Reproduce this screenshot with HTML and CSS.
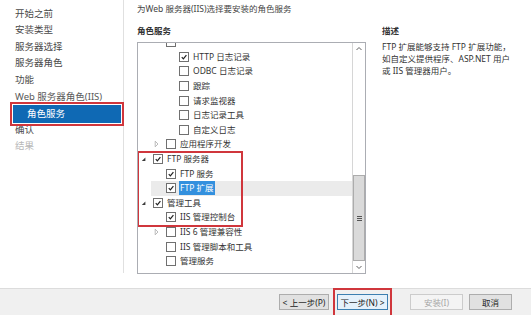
FILE: index.html
```html
<!DOCTYPE html>
<html lang="zh-CN">
<head>
<meta charset="utf-8">
<title>添加角色和功能向导</title>
<link rel="stylesheet" href="styles.css">
</head>
<body>
<div class="window">
  <div class="main">
    <nav class="nav">
      <div class="nav-item">开始之前</div>
      <div class="nav-item">安装类型</div>
      <div class="nav-item">服务器选择</div>
      <div class="nav-item">服务器角色</div>
      <div class="nav-item">功能</div>
      <div class="nav-item nav-item--muted">Web 服务器角色(IIS)</div>
      <div class="nav-item nav-item--current">角色服务</div>
      <div class="nav-item">确认</div>
      <div class="nav-item nav-item--disabled">结果</div>
    </nav>
    <section class="content">
      <div class="page-title">为Web 服务器(IIS)选择要安装的角色服务</div>
      <div class="columns">
        <div class="services">
          <div class="section-head">角色服务</div>
          <div class="listbox">
            <div class="tree">
              <div class="tree-inner">
                <div class="row l1"><span class="exp"></span><span class="cb"></span><span class="label"></span></div>
                <div class="row l2"><span class="exp"></span><span class="cb"><svg viewBox="0 0 10 10"><path d="M2.2 5.2 L4.2 7.3 L8 2.6"/></svg></span><span class="label">HTTP 日志记录</span></div>
                <div class="row l2"><span class="exp"></span><span class="cb"></span><span class="label">ODBC 日志记录</span></div>
                <div class="row l2"><span class="exp"></span><span class="cb"></span><span class="label">跟踪</span></div>
                <div class="row l2"><span class="exp"></span><span class="cb"></span><span class="label">请求监视器</span></div>
                <div class="row l2"><span class="exp"></span><span class="cb"></span><span class="label">日志记录工具</span></div>
                <div class="row l2"><span class="exp"></span><span class="cb"></span><span class="label">自定义日志</span></div>
                <div class="row l1"><span class="exp"><svg viewBox="0 0 10 10"><path class="collapsed" d="M1.5 1.5 L5 5 L1.5 8.5 Z"/></svg></span><span class="cb"></span><span class="label">应用程序开发</span></div>
                <div class="group">
                  <div class="row l0"><span class="exp"><svg viewBox="0 0 10 10"><path class="expanded" d="M5.5 3 L5.5 7.5 L1 7.5 Z"/></svg></span><span class="cb"><svg viewBox="0 0 10 10"><path d="M2.2 5.2 L4.2 7.3 L8 2.6"/></svg></span><span class="label">FTP 服务器</span></div>
                  <div class="row l1"><span class="exp"></span><span class="cb"><svg viewBox="0 0 10 10"><path d="M2.2 5.2 L4.2 7.3 L8 2.6"/></svg></span><span class="label">FTP 服务</span></div>
                  <div class="row l1 row--selected"><span class="exp"></span><span class="cb"><svg viewBox="0 0 10 10"><path d="M2.2 5.2 L4.2 7.3 L8 2.6"/></svg></span><span class="label label--selected">FTP 扩展</span></div>
                  <div class="row l0"><span class="exp"><svg viewBox="0 0 10 10"><path class="expanded" d="M5.5 3 L5.5 7.5 L1 7.5 Z"/></svg></span><span class="cb"><svg viewBox="0 0 10 10"><path d="M2.2 5.2 L4.2 7.3 L8 2.6"/></svg></span><span class="label">管理工具</span></div>
                  <div class="row l1"><span class="exp"></span><span class="cb"><svg viewBox="0 0 10 10"><path d="M2.2 5.2 L4.2 7.3 L8 2.6"/></svg></span><span class="label">IIS 管理控制台</span></div>
                </div>
                <div class="row l1"><span class="exp"><svg viewBox="0 0 10 10"><path class="collapsed" d="M1.5 1.5 L5 5 L1.5 8.5 Z"/></svg></span><span class="cb"></span><span class="label">IIS 6 管理兼容性</span></div>
                <div class="row l1"><span class="exp"></span><span class="cb"></span><span class="label">IIS 管理脚本和工具</span></div>
                <div class="row l1"><span class="exp"></span><span class="cb"></span><span class="label">管理服务</span></div>
              </div>
            </div>
            <div class="scrollbar">
              <div class="sb-btn"><svg viewBox="0 0 8 6"><path d="M1.5 4 L4 1.5 L6.5 4"/></svg></div>
              <div class="sb-track">
                <div class="sb-thumb"><span class="grip"></span><span class="grip"></span><span class="grip"></span></div>
              </div>
              <div class="sb-btn"><svg viewBox="0 0 8 6"><path d="M1.5 2 L4 4.5 L6.5 2"/></svg></div>
            </div>
          </div>
        </div>
        <div class="desc">
          <div class="section-head">描述</div>
          <p class="desc-text">FTP 扩展能够支持 FTP 扩展功能，<br>如自定义提供程序、ASP.NET 用户<br>或 IIS 管理器用户。</p>
        </div>
      </div>
    </section>
  </div>
  <footer class="footer">
    <button class="btn btn-prev">&lt; 上一步(P)</button>
    <button class="btn btn-next">下一步(N) &gt;</button>
    <button class="btn btn-install" disabled>安装(I)</button>
    <button class="btn btn-cancel">取消</button>
  </footer>
</div>
</body>
</html>
```
FILE: styles.css
```css
html, body {
  margin: 0;
  padding: 0;
}
body {
  width: 531px;
  height: 315px;
  overflow: hidden;
  background: #ffffff;
  font-family: "Noto Sans", "Noto Sans CJK SC", sans-serif;
  color: #333333;
}
.window {
  display: flex;
  flex-direction: column;
  height: 315px;
}
.main {
  display: flex;
  height: 288px;
  flex: none;
}

/* left navigation */
.nav {
  width: 124px;
  flex: none;
  box-sizing: border-box;
  border-right: 1px solid #e0e0e0;
  margin-bottom: 15px;
  padding-top: 5.7px;
}
.nav-item {
  height: 16.6px;
  line-height: 16.6px;
  padding-left: 15px;
  font-size: 9.5px;
  color: #4a4a4a;
  white-space: nowrap;
}
.nav-item--muted {
  color: #5a5a5a;
}
.nav-item--disabled {
  color: #b8b8b8;
}
.nav-item--current {
  height: 18px;
  line-height: 18px;
  margin: -0.7px 2px -0.7px 13px;
  padding-left: 14px;
  background: #0f69b4;
  color: #ffffff;
  outline: 2px solid #d0363c;
  outline-offset: 1px;
}

/* content */
.content {
  flex: 1;
  padding: 3px 0 0 13px;
}
.page-title {
  font-size: 8.5px;
  line-height: 12px;
  color: #444444;
  white-space: nowrap;
}
.columns {
  display: flex;
  margin-top: 10px;
}
.services {
  width: 229px;
  flex: none;
}
.section-head {
  font-size: 8.5px;
  line-height: 12px;
  font-weight: bold;
  color: #333333;
}
.listbox {
  margin-top: 5px;
  height: 232px;
  box-sizing: border-box;
  border: 1px solid #abadb3;
  display: flex;
}
.tree {
  flex: 1;
  overflow: hidden;
}
.tree-inner {
  margin-top: -8px;
}
.row {
  height: 14.6px;
  display: flex;
  align-items: center;
  font-size: 8.5px;
  color: #333333;
  white-space: nowrap;
}
.row.l0 { padding-left: 0; }
.row.l1 { padding-left: 13px; }
.row.l2 { padding-left: 26px; }
.row--selected {
  background: linear-gradient(to right, transparent 13px, #ebebeb 13px);
}
.exp {
  width: 12px;
  height: 10px;
  margin-left: 3px;
  flex: none;
  display: flex;
  align-items: center;
}
.exp svg {
  width: 8px;
  height: 8px;
}
.exp .collapsed {
  fill: none;
  stroke: #a9a9a9;
  stroke-width: 1;
}
.exp .expanded {
  fill: #3a3a3a;
}
.cb {
  width: 10px;
  height: 10px;
  box-sizing: border-box;
  border: 1px solid #707070;
  background: #ffffff;
  flex: none;
  margin-right: 4px;
  display: flex;
}
.cb svg {
  width: 8px;
  height: 8px;
}
.cb path {
  fill: none;
  stroke: #222222;
  stroke-width: 1.5;
}
.label {
  line-height: 14px;
}
.label--selected {
  background: #3390de;
  color: #ffffff;
  padding: 0 1px;
  margin-left: -1px;
}
.group {
  position: relative;
}
.group::after {
  content: "";
  position: absolute;
  left: -1px;
  top: -1px;
  bottom: -2px;
  width: 106px;
  box-sizing: border-box;
  border: 2px solid #d0363c;
  pointer-events: none;
}

/* scrollbar */
.scrollbar {
  width: 12px;
  flex: none;
  border-left: 1px solid #d6d6d6;
  background: #ffffff;
  display: flex;
  flex-direction: column;
}
.sb-btn {
  height: 12px;
  flex: none;
  display: flex;
  align-items: center;
  justify-content: center;
}
.sb-btn svg {
  width: 8px;
  height: 6px;
}
.sb-btn path {
  fill: none;
  stroke: #606060;
  stroke-width: 1;
}
.sb-track {
  flex: 1;
  display: flex;
  flex-direction: column;
}
.sb-thumb {
  margin-top: auto;
  height: 86px;
  box-sizing: border-box;
  border: 1px solid #acacac;
  background: #dadada;
  display: flex;
  flex-direction: column;
  align-items: center;
  justify-content: center;
  gap: 1px;
}
.grip {
  width: 5px;
  height: 1px;
  background: #555555;
}

/* description */
.desc {
  margin-left: 16px;
}
.desc-text {
  margin: 4px 0 0;
  font-size: 8.5px;
  line-height: 12px;
  color: #333333;
  white-space: nowrap;
}

/* footer */
.footer {
  flex: 1;
  box-sizing: border-box;
  border-top: 1px solid #dcdcdc;
  background: #f0f0f0;
  display: flex;
  justify-content: flex-end;
  align-items: flex-start;
  padding: 5px 19px 0 0;
}
.btn {
  height: 16px;
  box-sizing: border-box;
  border: 1px solid #adadad;
  background: #e1e1e1;
  font-family: "Noto Sans", "Noto Sans CJK SC", sans-serif;
  font-size: 8.5px;
  color: #222222;
  padding: 0;
  display: flex;
  align-items: center;
  justify-content: center;
}
.btn-prev {
  width: 50px;
  margin-right: 8px;
}
.btn-next {
  width: 51px;
  margin-right: 22px;
  border-color: #3c7fb1;
  background: #e5f1fb;
  position: relative;
}
.btn-next::after {
  content: "";
  position: absolute;
  left: -5px;
  right: -5px;
  top: -7px;
  bottom: -10px;
  border: 2px solid #d0363c;
}
.btn-install {
  width: 53px;
  margin-right: 6px;
  border-color: #cccccc;
  background: #f4f4f4;
  color: #a6a6a6;
}
.btn-cancel {
  width: 43px;
}
```
